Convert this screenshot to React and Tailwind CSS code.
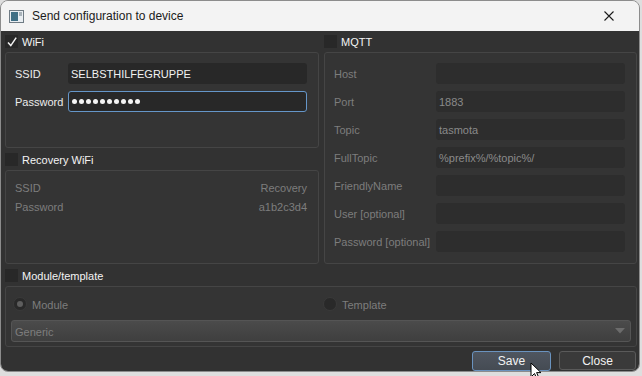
import React from "react";

const LABEL_ON = "text-[#ececec]";
const LABEL_OFF = "text-[#7d7d7d]";

function CheckBox({ checked }) {
  return (
    <span className="w-[13px] h-[13px] bg-[#282828] flex items-center justify-center shrink-0">
      {checked && (
        <svg width="12" height="12" viewBox="0 0 12 12">
          <path d="M2 6.5 L4.8 9.6 L10.2 1.6" fill="none" stroke="#f2f2f2" strokeWidth="1.5" />
        </svg>
      )}
    </span>
  );
}

function Header({ checked, children, h = "h-[21px]" }) {
  return (
    <div className={`${h} flex items-center gap-[4px]`}>
      <CheckBox checked={checked} />
      <span className="text-[#f4f4f4] pt-[2px]">{children}</span>
    </div>
  );
}

function Group({ className = "", children }) {
  return (
    <div className={`border border-[#454545] rounded-[3px] bg-[#343434] ${className}`}>{children}</div>
  );
}

function MqttRow({ label, value }) {
  return (
    <div className="flex items-center h-[21px]">
      <span className={`w-[102px] pt-[2px] ${LABEL_OFF}`}>{label}</span>
      <div className="w-[189px] h-[21px] rounded-[3px] bg-[#2d2d2d] flex items-center px-[3px] pt-[2px] text-[#8a8a8a]">
        {value}
      </div>
    </div>
  );
}

function Radio({ dot }) {
  return (
    <span className="w-[14px] h-[14px] rounded-full bg-[#292929] border border-[#3a3a3a] flex items-center justify-center">
      {dot && <span className="w-[6px] h-[6px] rounded-full bg-[#5e5e5e]" />}
    </span>
  );
}

export default function App() {
  return (
    <div className="w-[642px] h-[376px] bg-[#dedede] overflow-hidden relative font-['Liberation_Sans',Arial,sans-serif] text-[11px]">
      <div className="w-[640px] h-[372px] rounded-[8px] overflow-hidden border border-[#8c8c8c] flex flex-col">
        {/* title bar */}
        <div className="h-[30px] bg-[#f3f3f3] flex items-center shrink-0">
          <svg className="ml-[8px]" width="15" height="13" viewBox="0 0 15 13">
            <rect x="0.5" y="0.5" width="14" height="12" fill="#e9eef2" stroke="#6f7b84" />
            <rect x="2" y="2" width="7" height="9" fill="#3f6f85" />
            <rect x="10" y="2" width="3" height="4" fill="#a9b3ba" />
          </svg>
          <span className="ml-[8px] text-[12px] text-[#1b1b1b]">Send configuration to device</span>
          <svg className="ml-auto mr-[25px]" width="10" height="10" viewBox="0 0 10 10">
            <path d="M0.5 0.5 L9.5 9.5 M9.5 0.5 L0.5 9.5" stroke="#1b1b1b" strokeWidth="1.1" />
          </svg>
        </div>

        {/* body */}
        <div className="flex-1 bg-[#323232] pl-[4px] flex flex-col">
          <div className="grid grid-cols-[314px_313px] gap-x-[5px]">
            <div className="flex flex-col">
              <Header checked>WiFi</Header>
              <Group className="h-[96px] pt-[10px] pl-[9px] flex flex-col gap-[7px]">
                <div className="flex items-center h-[21px]">
                  <span className={`w-[53px] pt-[2px] ${LABEL_ON}`}>SSID</span>
                  <div className="w-[239px] h-[21px] rounded-[3px] bg-[#282828] flex items-center px-[3px] pt-[2px] text-[#f2f2f2]">
                    SELBSTHILFEGRUPPE
                  </div>
                </div>
                <div className="flex items-center h-[21px]">
                  <span className={`w-[53px] pt-[2px] ${LABEL_ON}`}>Password</span>
                  <div className="w-[239px] h-[21px] rounded-[3px] bg-[#282828] border border-[#6596c9] flex items-center gap-[2px] px-[3px]">
                    {Array.from({ length: 10 }).map((_, i) => (
                      <span key={i} className="w-[5px] h-[5px] rounded-full bg-[#f4f4f4]" />
                    ))}
                  </div>
                </div>
              </Group>
              <Header h="h-[22px]">Recovery WiFi</Header>
              <Group className="h-[94px] pt-[8px] pl-[9px] pr-[11px]">
                <div className={`flex justify-between h-[19px] items-center ${LABEL_OFF}`}>
                  <span>SSID</span>
                  <span>Recovery</span>
                </div>
                <div className={`flex justify-between h-[19px] items-center ${LABEL_OFF}`}>
                  <span>Password</span>
                  <span>a1b2c3d4</span>
                </div>
              </Group>
            </div>

            <div className="flex flex-col">
              <Header>MQTT</Header>
              <Group className="h-[212px] pt-[10px] pl-[9px] flex flex-col gap-[7px]">
                <MqttRow label="Host" value="" />
                <MqttRow label="Port" value="1883" />
                <MqttRow label="Topic" value="tasmota" />
                <MqttRow label="FullTopic" value="%prefix%/%topic%/" />
                <MqttRow label="FriendlyName" value="" />
                <MqttRow label="User [optional]" value="" />
                <MqttRow label="Password [optional]" value="" />
              </Group>
            </div>
          </div>

          <Header h="h-[22px]">Module/template</Header>
          <Group className="w-[632px] h-[61px] pt-[10px] px-[5px] flex flex-col">
            <div className="flex items-center h-[14px] pl-[2px]">
              <div className="w-[310px] flex items-center gap-[5px]">
                <Radio dot />
                <span className={`pt-[2px] ${LABEL_OFF}`}>Module</span>
              </div>
              <div className="flex items-center gap-[5px]">
                <Radio />
                <span className={`pt-[2px] ${LABEL_OFF}`}>Template</span>
              </div>
            </div>
            <div className="mt-[9px] h-[22px] rounded-[3px] border border-[#555555] bg-gradient-to-b from-[#4b4b4b] to-[#3f3f3f] flex items-center pl-[3px] pr-[5px] text-[#7e7e7e]">
              <span className="pt-[2px]">Generic</span>
              <svg className="ml-auto" width="10" height="6" viewBox="0 0 10 6">
                <path d="M0 0 H10 L5 5.5 Z" fill="#6c6c6c" />
              </svg>
            </div>
          </Group>

          <div className="w-[632px] flex justify-end gap-[8px] mt-[4px] pr-[1px]">
            <button className="w-[79px] h-[20px] rounded-[3px] border border-[#6a93bf] bg-gradient-to-b from-[#4f5660] to-[#454b53] text-[#f2f2f2] text-[12px]">
              Save
            </button>
            <button className="w-[77px] h-[19px] rounded-[3px] border border-[#5a5a5a] bg-[#3a3a3a] text-[#f2f2f2] text-[12px]">
              Close
            </button>
          </div>
        </div>
      </div>

      {/* mouse pointer */}
      <svg className="absolute left-[530px] top-[362px]" width="12" height="18" viewBox="0 0 12 18">
        <path d="M1 1 L1 15 L4.5 11.5 L7 17 L9 16 L6.6 10.6 L11 10.6 Z" fill="#ffffff" stroke="#000000" strokeWidth="1" strokeLinejoin="round" />
      </svg>
    </div>
  );
}
